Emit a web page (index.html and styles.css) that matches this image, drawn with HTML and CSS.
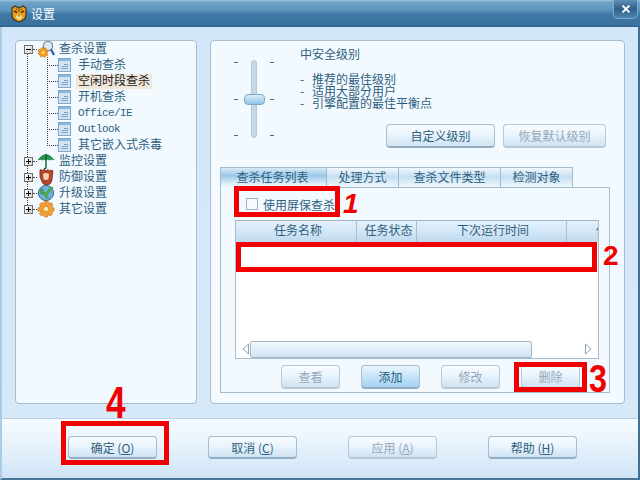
FILE: index.html
```html
<!DOCTYPE html>
<html lang="zh-CN">
<head>
  <meta charset="UTF-8">
  <title>设置</title>
  <link rel="stylesheet" href="styles.css">
</head>
<body>
<div class="window">
  <div class="titlebar">
    <svg class="logo" width="16" height="18" viewBox="0 0 16 18">
      <path d="M1 3 L4 1 L8 3 L12 1 L15 3 L15 10 Q15 15 8 17 Q1 15 1 10 Z" fill="#e8a11c" stroke="#3a3320" stroke-width="1.2"/>
      <path d="M3 6 L6 7.5 M13 6 L10 7.5" stroke="#5a2c08" stroke-width="1.6"/>
      <path d="M8 4 V7 M5 3.5 L6 5 M11 3.5 L10 5" stroke="#6b3a0c" stroke-width="1"/>
      <path d="M5 11 Q8 9 11 11 Q10 14.5 8 14.5 Q6 14.5 5 11 Z" fill="#fbe6a8"/>
      <path d="M7 10.5 H9 L8 12 Z" fill="#6b2a08"/>
    </svg>
    <span class="title">设置</span>
    <div class="close">
      <svg width="10" height="8" viewBox="0 0 10 8"><path d="M1.5 .5 L8.5 7.5 M8.5 .5 L1.5 7.5" stroke="#fff" stroke-width="1.8"/></svg>
    </div>
  </div>

  <div class="main">
    <div class="panel tree">
      <div class="node">
        <span class="exp minus"></span>
        <svg class="icon" width="18" height="18" viewBox="0 0 18 18">
          <circle cx="11" cy="6" r="4.6" fill="#dfe9f2" stroke="#7d8fa3" stroke-width="1.4"/>
          <path d="M14 9.5 L17 15" stroke="#2a5f9a" stroke-width="2.2"/>
          <path d="M5.5 7 L7 8.6 L9 8 L9.4 10 L11 11 L10 13 L11 15 L9 15.5 L7.5 17.5 L5.5 16 L3.5 17 L3 15 L1 14 L2 12 L1 10 L3 9.5 Z" fill="#ef9d1e" stroke="#c96f10" stroke-width=".6"/>
          <circle cx="6" cy="12.5" r="1.6" fill="#ffe08a"/>
        </svg>
        <span class="label">查杀设置</span>
      </div>
      <div class="children">
        <div class="leaf"><svg class="doc" width="13" height="14" viewBox="0 0 13 14"><use href="#doc"/></svg><span class="label">手动查杀</span></div>
        <div class="leaf"><svg class="doc" width="13" height="14" viewBox="0 0 13 14"><use href="#doc"/></svg><span class="label active">空闲时段查杀</span></div>
        <div class="leaf"><svg class="doc" width="13" height="14" viewBox="0 0 13 14"><use href="#doc"/></svg><span class="label">开机查杀</span></div>
        <div class="leaf"><svg class="doc" width="13" height="14" viewBox="0 0 13 14"><use href="#doc"/></svg><span class="label mono">Office/IE</span></div>
        <div class="leaf"><svg class="doc" width="13" height="14" viewBox="0 0 13 14"><use href="#doc"/></svg><span class="label mono">Outlook</span></div>
        <div class="leaf"><svg class="doc" width="13" height="14" viewBox="0 0 13 14"><use href="#doc"/></svg><span class="label">其它嵌入式杀毒</span></div>
      </div>
      <div class="node">
        <span class="exp"></span>
        <svg class="icon" width="18" height="18" viewBox="0 0 18 18">
          <path d="M1 8 Q9 -3 17 8 Q14 6.5 12.5 8 Q10.5 6.5 9 8 Q7 6.5 5.5 8 Q3 6.5 1 8 Z" fill="#1f9a4a" stroke="#0f6a30" stroke-width=".6"/>
          <path d="M9 2 V15 Q9 17 7 16.5" fill="none" stroke="#14602c" stroke-width="1.4"/>
        </svg>
        <span class="label">监控设置</span>
      </div>
      <div class="node">
        <span class="exp"></span>
        <svg class="icon" width="18" height="18" viewBox="0 0 18 18">
          <path d="M3 2 Q2 9 5 14 Q6 17 10 17 Q14 17 15 12 L16 3 Q14 1 12.5 3 Q11 0 9 3 Q7 0 5.5 2.5 Q4 1 3 2 Z" fill="#b5462c" stroke="#6d2a18" stroke-width=".7"/>
          <path d="M6 6 Q9 4 12 6 L11.5 11 Q9 13 6.5 11 Z" fill="#f0d2b0"/>
        </svg>
        <span class="label">防御设置</span>
      </div>
      <div class="node">
        <span class="exp"></span>
        <svg class="icon" width="18" height="18" viewBox="0 0 18 18">
          <circle cx="9" cy="9" r="7.6" fill="#6fb0dc" stroke="#2f6f9f"/>
          <path d="M3 5 Q6 3 7 6 L5 11 Q2 9 3 5 Z M8 14 L11 12 L12 15 Z" fill="#4a9a54"/>
          <path d="M5.5 9 L8.5 13 L16 3.5 L14 3 L8.5 9.5 L7 8 Z" fill="#4fb83a" stroke="#2d7f22" stroke-width=".5"/>
        </svg>
        <span class="label">升级设置</span>
      </div>
      <div class="node">
        <span class="exp"></span>
        <svg class="icon" width="18" height="18" viewBox="0 0 18 18">
          <path d="M8 1 H11 L11.5 3.5 L14 2.5 L16 5 L14.5 7 L17 8 V11 L14.5 11.5 L15.5 14 L13 16 L11 14.5 L10.5 17 H7.5 L7 14.5 L4.5 16 L2.5 14 L4 11.5 L1 11 V8 L3.5 7 L2.5 4.5 L5 2.5 L7 3.5 Z" fill="#f0a032" stroke="#c8771a" stroke-width=".7"/>
          <circle cx="9" cy="9" r="2.8" fill="#fde3b0" stroke="#c8771a" stroke-width=".7"/>
        </svg>
        <span class="label">其它设置</span>
      </div>
    </div>

    <div class="panel settings">
      <div class="level">
        <div class="slider">
          <div class="ticks"><i></i><i></i><i></i></div>
          <div class="track"><div class="thumb"></div></div>
          <div class="ticks"><i></i><i></i><i></i></div>
        </div>
        <div class="info">
          <div class="level-name">中安全级别</div>
          <div class="level-line"><span class="dash">-</span>推荐的最佳级别</div>
          <div class="level-line"><span class="dash">-</span>适用大部分用户</div>
          <div class="level-line"><span class="dash">-</span>引擎配置的最佳平衡点</div>
          <div class="level-btns">
            <button class="btn wide">自定义级别</button>
            <button class="btn wide2 off">恢复默认级别</button>
          </div>
        </div>
      </div>

      <div class="tabs">
        <div class="tab on t1">查杀任务列表</div>
        <div class="tab t2">处理方式</div>
        <div class="tab t3">查杀文件类型</div>
        <div class="tab t2">检测对象</div>
      </div>
      <div class="tab-body">
        <label class="check"><span class="box"></span>使用屏保查杀</label>
        <div class="list">
          <div class="list-head">
            <div class="col c1">任务名称</div>
            <div class="col c2">任务状态</div>
            <div class="col c3">下次运行时间</div>
            <div class="col c4">任务类型</div>
          </div>
          <div class="list-rows"></div>
          <div class="hscroll">
            <svg width="8" height="12" viewBox="0 0 8 12"><path d="M6.5 1 L1 6 L6.5 11 Z" fill="#fff" stroke="#8fa3b3"/></svg>
            <div class="hthumb"></div>
            <svg class="hright" width="8" height="12" viewBox="0 0 8 12"><path d="M1.5 1 L7 6 L1.5 11 Z" fill="#fff" stroke="#8fa3b3"/></svg>
          </div>
        </div>
        <div class="list-btns">
          <button class="btn small off">查看</button>
          <button class="btn small strong">添加</button>
          <button class="btn small off">修改</button>
          <button class="btn small off">删除</button>
        </div>
      </div>
    </div>
  </div>

  <div class="footer">
    <button class="btn foot">确定 (<u>O</u>)</button>
    <button class="btn foot">取消 (<u>C</u>)</button>
    <button class="btn foot off">应用 (<u>A</u>)</button>
    <button class="btn foot">帮助 (<u>H</u>)</button>
  </div>

  <!-- red marks on top of the screenshot -->
  <div class="mark m-check"></div>
  <div class="mark m-row"></div>
  <div class="mark m-del"></div>
  <div class="mark m-ok"></div>
  <span class="num n1">1</span>
  <span class="num n2">2</span>
  <span class="num n3">3</span>
  <span class="num n4">4</span>
</div>

<svg class="defs" width="0" height="0">
  <symbol id="doc" viewBox="0 0 13 14">
    <rect x=".5" y=".5" width="12" height="13" fill="#cfe4f5" stroke="#7fa8c9"/>
    <rect x="1" y="1" width="11" height="2" fill="#8db6d6"/>
    <path d="M3 10.5 H10 M4 8.5 H10 M6 6.5 H10" stroke="#7fa2c0"/>
  </symbol>
</svg>
</body>
</html>
```

FILE: styles.css
```css
* {
  box-sizing: border-box;
}
html, body {
  margin: 0;
  padding: 0;
}
body {
  width: 640px;
  height: 480px;
  overflow: hidden;
  font-family: "Noto Sans CJK SC", "Liberation Sans", sans-serif;
  font-size: 12px;
  color: #2f5f80;
}
.defs {
  position: absolute;
}
.window {
  position: relative;
  width: 640px;
  height: 480px;
  display: flex;
  flex-direction: column;
  background: #d4e7f8;
  border-left: 2px solid #a8cbe6;
  border-right: 2px solid #3f6f95;
  border-bottom: 2px solid #4b7698;
}

/* title bar */
.titlebar {
  flex: none;
  height: 27px;
  margin: 0 -2px 0 -2px;
  padding-left: 11px;
  display: flex;
  align-items: center;
  color: #fff;
  background: linear-gradient(#a3c6e0 0, #6fa2c8 2px, #5f96bf 10px, #3f7aa8 14px, #3a719d 25px, #2d5f88 27px);
}
.title {
  margin-left: 4px;
  font-size: 12px;
  line-height: 14px;
}
.close {
  margin-left: auto;
  margin-right: 2px;
  margin-top: -8px;
  width: 25px;
  height: 19px;
  display: flex;
  align-items: center;
  justify-content: center;
  border: 1px solid #7fa9c8;
  border-top: 0;
  border-radius: 0 0 5px 5px;
  background: linear-gradient(#5f8fb4, #2f5f8a 50%, #4f86b2);
}

/* main area */
.main {
  flex: 1;
  display: flex;
  gap: 13px;
  padding: 13px 13px 14px 13px;
  background: linear-gradient(#d2e7f9, #d6e9f9);
  border-bottom: 1px solid #b9d2e6;
}
.panel {
  background: #f2f9ff;
  border: 1px solid #a9bccb;
  border-radius: 4px;
}

/* left tree */
.tree {
  position: relative;
  width: 182px;
}
.tree::before {
  content: "";
  position: absolute;
  left: 11px;
  top: 11px;
  height: 157px;
  border-left: 1px dotted #444;
}
.node, .leaf {
  position: relative;
  height: 16px;
  display: flex;
  align-items: center;
}
.node {
  padding-left: 8px;
}
.exp {
  position: relative;
  flex: none;
  width: 9px;
  height: 9px;
  margin-right: 4px;
  border: 1px solid #6e6e6e;
  background: linear-gradient(135deg, #fff, #ccc);
  z-index: 1;
}
.exp::before {
  content: "";
  position: absolute;
  left: 1px;
  top: 3px;
  width: 5px;
  height: 1px;
  background: #000;
}
.exp::after {
  content: "";
  position: absolute;
  left: 3px;
  top: 1px;
  width: 1px;
  height: 5px;
  background: #000;
}
.exp.minus::after {
  display: none;
}
.node::before {
  content: "";
  position: absolute;
  left: 17px;
  top: 8px;
  width: 4px;
  border-top: 1px dotted #444;
}
.icon {
  flex: none;
  margin-right: 4px;
}
.children {
  position: relative;
}
.children::before {
  content: "";
  position: absolute;
  left: 31px;
  top: 0;
  height: 87px;
  border-left: 1px dotted #444;
}
.leaf {
  padding-left: 42px;
}
.leaf::before {
  content: "";
  position: absolute;
  left: 31px;
  top: 8px;
  width: 11px;
  border-top: 1px dotted #444;
}
.doc {
  flex: none;
  margin-right: 5px;
}
.label {
  height: 15px;
  line-height: 12px;
  white-space: nowrap;
}
.leaf .label {
  padding: 0 2px;
}
.label.active {
  color: #1c1c1c;
  background: #efe8da;
}
.label.mono {
  font-family: "Liberation Mono", monospace;
  font-size: 11px;
  line-height: 15px;
  letter-spacing: -0.6px;
}

/* right side */
.settings {
  width: 415px;
}
.level {
  height: 126px;
  display: flex;
  padding-left: 23px;
}
.slider {
  flex: none;
  width: 40px;
  height: 78px;
  margin-top: 19px;
  display: flex;
  justify-content: space-between;
}
.ticks {
  display: flex;
  flex-direction: column;
  justify-content: space-between;
  padding: 2px 0;
}
.ticks i {
  display: block;
  width: 4px;
  height: 1px;
  background: #5a6b78;
}
.track {
  position: relative;
  width: 6px;
  background: #c5d8e8;
  border: 1px solid #b4c9da;
  border-radius: 3px;
}
.thumb {
  position: absolute;
  left: -8px;
  top: 33px;
  width: 21px;
  height: 11px;
  border: 1px solid #7fa8c8;
  border-radius: 4px;
  background: linear-gradient(#d9ecfa, #93c6ea);
}
.info {
  padding: 6px 0 0 26px;
}
.level-name {
  line-height: 14px;
  margin-bottom: 12px;
}
.level-line {
  display: flex;
  line-height: 12px;
  white-space: nowrap;
}
.dash {
  width: 12px;
}
.level-btns {
  margin: 15px 0 0 86px;
  display: flex;
  gap: 8px;
}
.btn {
  font: inherit;
  color: #2f5f80;
  padding: 0;
  border: 1px solid #a8bdcd;
  border-bottom: 2px solid #93adc2;
  border-radius: 4px;
  background: linear-gradient(#f8fcff, #eaf4fc 45%, #cfe3f3);
}
.btn.off {
  color: #93a8b8;
  border-color: #b8c8d4;
}
.btn.strong {
  color: #1f5c85;
  background: linear-gradient(#eaf5fd, #bfe0f6 60%, #a5d2f0);
}
.wide {
  width: 109px;
  height: 24px;
}
.wide2 {
  width: 103px;
  height: 24px;
}
.tabs {
  margin-left: 9px;
  height: 20px;
  display: flex;
}
.tab {
  height: 21px;
  line-height: 18px;
  text-align: center;
  border: 1px solid #a3bccd;
  border-left: 0;
  background: linear-gradient(#f2f8fd, #c5dff2 45%, #f0f7fd);
  white-space: nowrap;
}
.tab.on {
  border-left: 1px solid #a3bccd;
  border-bottom-color: #f2f9ff;
  background: linear-gradient(#d9eaf7 0, #9cc8e8 40%, #e8f4fc 90%);
  position: relative;
}
.t1 {
  width: 107px;
  padding-right: 2px;
}
.t2 {
  width: 72px;
}
.t3 {
  width: 102px;
}
.tab-body {
  margin-left: 9px;
  width: 390px;
  height: 206px;
  border: 1px solid #a3bccd;
}
.check {
  display: flex;
  align-items: center;
  height: 14px;
  margin: 9px 0 0 25px;
  white-space: nowrap;
}
.box {
  width: 12px;
  height: 12px;
  margin-right: 5px;
  border: 1px solid #9db2c2;
  background: #f7fbff;
}
.list {
  margin: 9px 0 0 14px;
  width: 364px;
  height: 139px;
  display: flex;
  flex-direction: column;
  background: #fff;
  border: 1px solid #a9bccb;
  border-top-color: #9fb5c6;
  overflow: hidden;
}
.list-head {
  flex: none;
  height: 21px;
  display: flex;
  background: linear-gradient(#e4f1fb, #d3e7f7 50%, #bfd9ed);
}
.col {
  flex: none;
  line-height: 18px;
  text-align: center;
  white-space: nowrap;
  overflow: hidden;
  border-right: 1px solid #aac0d0;
}
.c1 {
  width: 121px;
  padding-left: 4px;
}
.c2 {
  width: 60px;
  padding-left: 4px;
}
.c3 {
  width: 150px;
  padding-left: 3px;
}
.c4 {
  width: 31px;
  border-right: 0;
  text-align: left;
  padding-left: 29px;
}
.list-rows {
  flex: 1;
}
.hscroll {
  flex: none;
  height: 18px;
  display: flex;
  align-items: center;
  padding: 0 6px;
}
.hthumb {
  width: 282px;
  height: 17px;
  margin-left: 0;
  border: 1px solid #a3b7c6;
  border-radius: 2px;
  background: linear-gradient(#f4f9fd, #cfe3f3);
}
.hright {
  margin-left: auto;
}
.list-btns {
  margin: 6px 0 0 60px;
  display: flex;
  gap: 21px;
}
.small {
  width: 59px;
  height: 24px;
}

/* footer */
.footer {
  flex: none;
  height: 59px;
  padding: 17px 0 0 66px;
  display: flex;
  align-items: flex-start;
  gap: 51px;
  background: linear-gradient(#f6fbff, #e8f3fc 40%, #cfe4f6);
}
.foot {
  width: 89px;
  height: 23px;
}

/* red marks */
.mark {
  position: absolute;
  border: 5px solid #f00000;
}
.m-check {
  left: 232px;
  top: 186px;
  width: 106px;
  height: 31px;
}
.m-row {
  left: 234px;
  top: 242px;
  width: 361px;
  height: 30px;
}
.m-del {
  left: 512px;
  top: 362px;
  width: 73px;
  height: 30px;
}
.m-ok {
  left: 59px;
  top: 421px;
  width: 108px;
  height: 44px;
}
.num {
  position: absolute;
  font-family: "Liberation Sans", sans-serif;
  font-weight: bold;
  color: #f00000;
  line-height: 1;
  transform-origin: left top;
}
.n1 {
  left: 341px;
  top: 190px;
  font-size: 28px;
  font-style: italic;
}
.n2 {
  left: 601px;
  top: 242px;
  font-size: 28px;
}
.n3 {
  left: 587px;
  top: 360px;
  font-size: 38px;
  transform: scaleX(.85);
}
.n4 {
  left: 104px;
  top: 381px;
  font-size: 44px;
  transform: scaleX(.8);
}
```
